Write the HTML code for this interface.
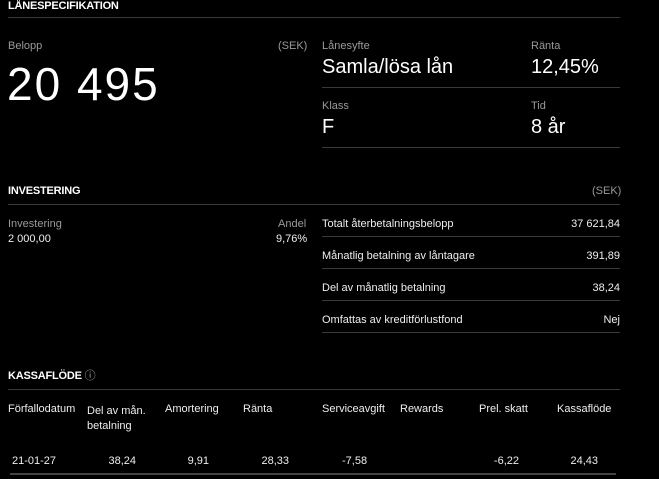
<!DOCTYPE html><html><head><style>
body{margin:0;width:659px;height:479px;background:#000;overflow:hidden;font-family:"Liberation Sans",sans-serif;color:#fff;position:relative}
.t{position:absolute;white-space:nowrap;line-height:1}
.h{font-size:11px;font-weight:bold;letter-spacing:-0.2px}
.l{font-size:11px;color:#9a9a9a}
.w{font-size:11px;color:#eee}
.v{font-size:20px}
.ln{position:absolute;height:1px;background:#3a3a3a}
.r{text-align:right}
</style></head><body>
<div class="t h" style="left:8px;top:1px">LÅNESPECIFIKATION</div>
<div class="ln" style="left:8px;top:17px;width:612px"></div>
<div class="t l" style="left:8px;top:41px">Belopp</div>
<div class="t l" style="left:278px;top:41px">(SEK)</div>
<div class="t" style="left:7px;top:61px;font-size:46px;letter-spacing:2px">20 495</div>
<div class="t l" style="left:322px;top:41px">Lånesyfte</div>
<div class="t v" style="left:322px;top:57px">Samla/lösa lån</div>
<div class="t l" style="left:531px;top:41px">Ränta</div>
<div class="t v" style="left:531px;top:57px">12,45%</div>
<div class="ln" style="left:322px;top:87px;width:298px"></div>
<div class="t l" style="left:322px;top:101px">Klass</div>
<div class="t v" style="left:322px;top:117px">F</div>
<div class="t l" style="left:531px;top:101px">Tid</div>
<div class="t v" style="left:531px;top:117px">8 år</div>
<div class="ln" style="left:322px;top:147px;width:298px"></div>
<div class="t h" style="left:8px;top:186px">INVESTERING</div>
<div class="t l" style="left:592px;top:186px">(SEK)</div>
<div class="ln" style="left:8px;top:204px;width:612px"></div>
<div class="t l" style="left:8px;top:219px">Investering</div>
<div class="t w" style="left:8px;top:234px">2 000,00</div>
<div class="t l" style="left:278px;top:219px">Andel</div>
<div class="t w" style="left:276px;top:234px">9,76%</div>
<div class="t w" style="left:322px;top:219px">Totalt återbetalningsbelopp</div>
<div class="t w r" style="right:39px;top:219px">37 621,84</div>
<div class="ln" style="left:322px;top:236px;width:298px"></div>
<div class="t w" style="left:322px;top:251px">Månatlig betalning av låntagare</div>
<div class="t w r" style="right:39px;top:251px">391,89</div>
<div class="ln" style="left:322px;top:268px;width:298px"></div>
<div class="t w" style="left:322px;top:283px">Del av månatlig betalning</div>
<div class="t w r" style="right:39px;top:283px">38,24</div>
<div class="ln" style="left:322px;top:300px;width:298px"></div>
<div class="t w" style="left:322px;top:315px">Omfattas av kreditförlustfond</div>
<div class="t w r" style="right:39px;top:315px">Nej</div>
<div class="ln" style="left:322px;top:332px;width:298px"></div>
<div class="t h" style="left:8px;top:371px">KASSAFLÖDE <span style="font-weight:normal;color:#aaa;font-size:11px">ⓘ</span></div>
<div class="ln" style="left:8px;top:389px;width:612px"></div>
<div class="t w" style="left:8px;top:404px">Förfallodatum</div>
<div class="t w" style="left:87px;top:404px;line-height:15px">Del av mån.<br>betalning</div>
<div class="t w" style="left:165px;top:404px">Amortering</div>
<div class="t w" style="left:243px;top:404px">Ränta</div>
<div class="t w" style="left:322px;top:404px">Serviceavgift</div>
<div class="t w" style="left:400px;top:404px">Rewards</div>
<div class="t w" style="left:479px;top:404px">Prel. skatt</div>
<div class="t w" style="left:557px;top:404px">Kassaflöde</div>
<div class="t w" style="left:12px;top:456px">21-01-27</div>
<div class="t w r" style="right:523px;top:456px">38,24</div>
<div class="t w r" style="right:450px;top:456px">9,91</div>
<div class="t w r" style="right:370px;top:456px">28,33</div>
<div class="t w" style="left:342px;top:456px">-7,58</div>
<div class="t w r" style="right:140px;top:456px">-6,22</div>
<div class="t w r" style="right:61px;top:456px">24,43</div>
<div class="ln" style="left:10px;top:473px;width:606px;background:#444;height:2px"></div>
</body></html>
